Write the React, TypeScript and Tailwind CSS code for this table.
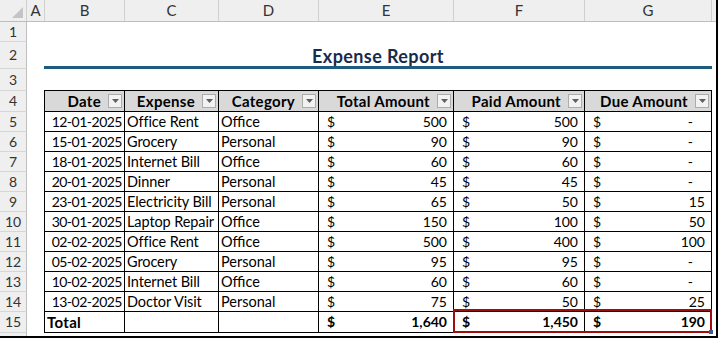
import React from 'react'

type Expense = {
  date: string
  name: string
  category: string
  total: number
  paid: number
  due: number
}

const expenses: Expense[] = [
  { date: '12-01-2025', name: 'Office Rent', category: 'Office', total: 500, paid: 500, due: 0 },
  { date: '15-01-2025', name: 'Grocery', category: 'Personal', total: 90, paid: 90, due: 0 },
  { date: '18-01-2025', name: 'Internet Bill', category: 'Office', total: 60, paid: 60, due: 0 },
  { date: '20-01-2025', name: 'Dinner', category: 'Personal', total: 45, paid: 45, due: 0 },
  { date: '23-01-2025', name: 'Electricity Bill', category: 'Personal', total: 65, paid: 50, due: 15 },
  { date: '30-01-2025', name: 'Laptop Repair', category: 'Office', total: 150, paid: 100, due: 50 },
  { date: '02-02-2025', name: 'Office Rent', category: 'Office', total: 500, paid: 400, due: 100 },
  { date: '05-02-2025', name: 'Grocery', category: 'Personal', total: 95, paid: 95, due: 0 },
  { date: '10-02-2025', name: 'Internet Bill', category: 'Office', total: 60, paid: 60, due: 0 },
  { date: '13-02-2025', name: 'Doctor Visit', category: 'Personal', total: 75, paid: 50, due: 25 },
]

const fmt = (n: number) => n.toLocaleString('en-US')

function RowNum({ n }: { n?: number }) {
  return (
    <div className="flex h-full w-[27px] shrink-0 items-center justify-center border-r border-b border-r-[#bdbdbd] border-b-[#d6d6d6] bg-[#efefef] text-[14px] leading-none text-[#333]">
      {n}
    </div>
  )
}

function FilterButton() {
  return (
    <span className="mr-[2px] flex h-[14px] w-[14px] shrink-0 items-center justify-center border border-[#acacac] bg-[#f2f2f2]">
      <svg width="7" height="4" viewBox="0 0 7 4">
        <path d="M0 0h7L3.5 4z" fill="#5f5f5f" />
      </svg>
    </span>
  )
}

function HeadCell({ label, w }: { label: string; w: string }) {
  return (
    <div className={`${w} flex h-full shrink-0 items-center justify-end gap-[7px] border-r border-b border-black bg-[#d9d9d9] text-[15px] font-bold tracking-[0.3px] leading-[16px]`}>
      <span>{label}</span>
      <FilterButton />
    </div>
  )
}

function Money({ v, w, bold }: { v: number; w: string; bold?: boolean }) {
  return (
    <div className={`${w} flex h-full shrink-0 items-center justify-between border-r border-b border-black pl-[8px] leading-[16px] ${bold ? 'font-bold' : ''} ${v === 0 ? 'pr-[18px]' : 'pr-[6px]'}`}>
      <span>$</span>
      <span>{v === 0 ? '-' : fmt(v)}</span>
    </div>
  )
}

export default function App() {
  const totals = expenses.reduce(
    (acc, e) => ({ total: acc.total + e.total, paid: acc.paid + e.paid, due: acc.due + e.due }),
    { total: 0, paid: 0, due: 0 },
  )

  return (
    <div className="relative h-[338px] w-[718px] overflow-hidden border-r-2 border-b-2 border-black bg-white font-['Lato',sans-serif] text-[14px] text-black">
      {/* column letters */}
      <div className="flex h-[22px] border-b border-[#bdbdbd] bg-[#efefef] text-[15px] text-[#333]">
        <div className="flex w-[27px] shrink-0 items-end justify-end border-r border-[#d0d0d0] p-[3px]">
          <svg width="11" height="11" viewBox="0 0 11 11">
            <path d="M11 0V11H0z" fill="#c4c4c4" />
          </svg>
        </div>
        {[
          ['A', 'w-[18px]'],
          ['B', 'w-[80px]'],
          ['C', 'w-[94px]'],
          ['D', 'w-[100px]'],
          ['E', 'w-[135px]'],
          ['F', 'w-[131px]'],
          ['G', 'w-[127px]'],
        ].map(([l, w]) => (
          <div key={l} className={`${w} flex shrink-0 items-center justify-center border-r border-[#d0d0d0] leading-none`}>
            {l}
          </div>
        ))}
        <div className="flex-1" />
      </div>

      {/* row 1 */}
      <div className="flex h-[20px]">
        <RowNum n={1} />
      </div>

      {/* row 2: title */}
      <div className="flex h-[27px]">
        <RowNum n={2} />
        <div className="w-[17px] shrink-0" />
        <div className="flex w-[668px] shrink-0 items-end justify-center border-b-[3px] border-[#1f5b7d] text-[18px] leading-[20px] font-bold tracking-[0.4px] text-[#172b4d]">
          Expense Report
        </div>
      </div>

      {/* row 3 */}
      <div className="flex h-[22px]">
        <RowNum n={3} />
        <div className="w-[17px] shrink-0" />
        <div className="w-[668px] shrink-0 border-b border-black" />
      </div>

      {/* row 4: table header */}
      <div className="flex h-[21px]">
        <RowNum n={4} />
        <div className="w-[18px] shrink-0 border-r border-black" />
        <HeadCell label="Date" w="w-[80px]" />
        <HeadCell label="Expense" w="w-[94px]" />
        <HeadCell label="Category" w="w-[100px]" />
        <HeadCell label="Total Amount" w="w-[135px]" />
        <HeadCell label="Paid Amount" w="w-[131px]" />
        <HeadCell label="Due Amount" w="w-[127px]" />
      </div>

      {expenses.map((e, i) => (
        <div key={i} className="flex h-[20px]">
          <RowNum n={i + 5} />
          <div className="w-[18px] shrink-0 border-r border-black" />
          <div className="flex h-full w-[80px] shrink-0 items-center justify-end border-r border-b border-black pr-[2px] leading-[16px] tracking-[-0.5px]">
            {e.date}
          </div>
          <div className="flex h-full w-[94px] shrink-0 items-center overflow-hidden whitespace-nowrap border-r border-b border-black pl-[2px] text-[14.5px] leading-[16px] tracking-[-0.1px]">
            {e.name}
          </div>
          <div className="flex h-full w-[100px] shrink-0 items-center border-r border-b border-black pl-[2px] text-[14.5px] leading-[16px]">
            {e.category}
          </div>
          <Money v={e.total} w="w-[135px]" />
          <Money v={e.paid} w="w-[131px]" />
          <Money v={e.due} w="w-[127px]" />
        </div>
      ))}

      {/* row 15: totals */}
      <div className="flex h-[21px]">
        <RowNum n={15} />
        <div className="w-[18px] shrink-0 border-r border-black" />
        <div className="flex h-full w-[80px] shrink-0 items-center border-r border-b border-black pl-[2px] text-[15px] leading-[16px] font-bold tracking-[0.3px]">
          Total
        </div>
        <div className="h-full w-[94px] shrink-0 border-r border-b border-black" />
        <div className="h-full w-[100px] shrink-0 border-r border-b border-black" />
        <Money v={totals.total} w="w-[135px]" bold />
        <Money v={totals.paid} w="w-[131px]" bold />
        <Money v={totals.due} w="w-[127px]" bold />
      </div>

      <div className="flex h-[10px]">
        <RowNum />
      </div>

      {/* selection around F15:G15 */}
      <div className="absolute top-[309px] left-[453px] h-[24px] w-[259px] border-2 border-[#a00d0d]">
        <span className="absolute -right-[3px] -bottom-[3px] h-[4px] w-[4px] bg-[#3c5a8a]" />
      </div>
    </div>
  )
}
